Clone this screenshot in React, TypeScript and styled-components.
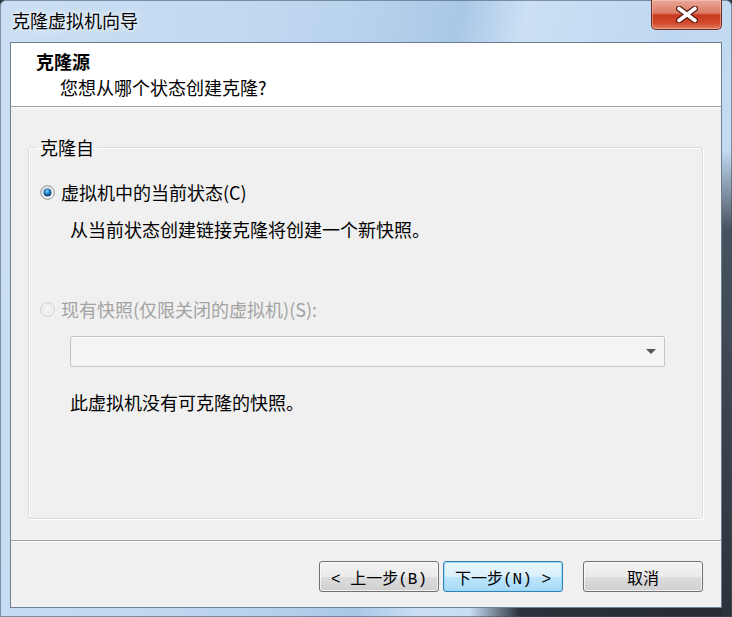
import React from "react";
import styled, { createGlobalStyle } from "styled-components";

const Global = createGlobalStyle`
  html, body { margin: 0; padding: 0; background: #2a3038; }
  body { font-family: "Noto Sans CJK SC", "Noto Sans", sans-serif; }
  * { box-sizing: border-box; }
`;

const Window = styled.div`
  width: 732px;
  height: 617px;
  display: flex;
  flex-direction: column;
  padding: 0 10px 9px 10px;
  border-radius: 6px 6px 0 0;
  background:
    linear-gradient(to bottom, rgba(42,48,56,0) 0px, rgba(42,48,56,0) 150px, rgba(50,58,70,0.85) 230px, #2c323b 100%) right top / 10px 100% no-repeat,
    linear-gradient(to right, rgba(42,48,56,0) 0px, rgba(42,48,56,0) 470px, #2c323b 520px, #262b32 100%) left bottom / 100% 9px no-repeat,
    linear-gradient(100deg, #cadff3 0%, #c1d8f0 30%, #b7d1ec 45%, #a9c7e7 55%, #cbe0f4 63%, #bfd8f1 80%, #c6ddf3 100%);
  box-shadow: inset 0 0 0 1px rgba(60, 80, 100, 0.55);
`;

const TitleBar = styled.div`
  height: 42px;
  flex: none;
  display: flex;
  align-items: flex-start;
  justify-content: space-between;
`;

const Title = styled.div`
  margin-top: 8px;
  padding-left: 2px;
  font-size: 18px;
  line-height: 24px;
  color: #000;
  text-shadow: 0 0 8px rgba(255, 255, 255, 0.95), 0 0 3px rgba(255, 255, 255, 0.9);
`;

const CloseButton = styled.div`
  width: 71px;
  height: 30px;
  border: 1px solid #6e2b22;
  border-top: none;
  border-radius: 0 0 5px 5px;
  background: linear-gradient(to bottom, #e9a99a 0%, #dc7a63 45%, #c8391d 52%, #d34a2c 80%, #e4805f 100%);
  box-shadow: inset 0 0 0 1px rgba(255, 210, 200, 0.45);
  display: flex;
  align-items: center;
  justify-content: center;
`;

const Client = styled.div`
  flex: 1;
  display: flex;
  flex-direction: column;
  border: 1px solid #6f7f92;
  background: #f0f0f0;
`;

const Header = styled.div`
  height: 64px;
  flex: none;
  background: #fff;
  border-bottom: 1px solid #a0a0a0;
  padding: 7px 0 0 25px;
`;

const HeaderTitle = styled.div`
  font-size: 18px;
  font-weight: 700;
  line-height: 22px;
  color: #000;
`;

const HeaderSub = styled.div`
  margin-top: 4px;
  padding-left: 24px;
  font-size: 18px;
  line-height: 22px;
  color: #000;
`;

const Body = styled.div`
  flex: 1;
  display: flex;
  flex-direction: column;
  padding: 28px 18px 21px 17px;
  border-top: 1px solid #fff;
`;

const GroupBox = styled.fieldset`
  flex: 1;
  margin: 0;
  padding: 0;
  border: 1px solid #d5dfe5;
  border-radius: 3px;
  box-shadow: inset 1px 1px 0 #fff, 1px 1px 0 #fff;
  display: flex;
  flex-direction: column;
  min-width: 0;
`;

const Legend = styled.legend`
  margin-left: 8px;
  padding: 0 3px;
  font-size: 18px;
  line-height: 22px;
  color: #000;
`;

const RadioRow = styled.div<{ $top: number; $disabled?: boolean }>`
  margin-top: ${(p) => p.$top}px;
  padding-left: 11px;
  height: 24px;
  display: flex;
  align-items: center;
  gap: 6px;
  font-size: 18px;
  color: ${(p) => (p.$disabled ? "#a3a3a3" : "#000")};
`;

const Text = styled.div<{ $top: number }>`
  margin-top: ${(p) => p.$top}px;
  padding-left: 41px;
  font-size: 18px;
  line-height: 24px;
  color: #000;
`;

const Combo = styled.div`
  margin: 15px 0 0 41px;
  width: 595px;
  height: 31px;
  border: 1px solid #c3c6c9;
  border-radius: 2px;
  background: #f4f4f4;
  box-shadow: inset 0 1px 0 #fafafa;
  display: flex;
  align-items: center;
  justify-content: flex-end;
  padding-right: 8px;
`;

const Arrow = styled.div`
  width: 0;
  height: 0;
  border-left: 5px solid transparent;
  border-right: 5px solid transparent;
  border-top: 5px solid #555;
`;

const Footer = styled.div`
  height: 67px;
  flex: none;
  border-top: 1px solid #a0a0a0;
  box-shadow: inset 0 1px 0 #fff;
  display: flex;
  justify-content: flex-end;
  align-items: flex-start;
  padding: 20px 18px 0 0;
`;

const Button = styled.div<{ $primary?: boolean; $gap?: number }>`
  margin-left: ${(p) => p.$gap ?? 0}px;
  width: 120px;
  height: 31px;
  border: 1px solid ${(p) => (p.$primary ? "#3c7fb1" : "#707070")};
  border-radius: 3px;
  background: ${(p) =>
    p.$primary
      ? "linear-gradient(to bottom, #eaf6fd 0%, #d9f0fc 50%, #bee6fd 51%, #a7d9f5 100%)"
      : "linear-gradient(to bottom, #f2f2f2 0%, #ebebeb 50%, #dddddd 51%, #cfcfcf 100%)"};
  box-shadow: inset 0 0 0 1px ${(p) => (p.$primary ? "rgba(140,220,250,0.9)" : "rgba(255,255,255,0.7)")};
  display: flex;
  align-items: center;
  justify-content: center;
  font-family: "Liberation Mono", "Noto Sans CJK SC", monospace;
  font-size: 16px;
  color: #000;
  white-space: pre;
`;

const Radio = ({ checked, disabled }: { checked?: boolean; disabled?: boolean }) => (
  <svg width="15" height="15" viewBox="0 0 15 15">
    <defs>
      <linearGradient id={disabled ? "rbgd" : "rbg"} x1="0" y1="0" x2="1" y2="1">
        <stop offset="0" stopColor={disabled ? "#f2f2f2" : "#dcdcdc"} />
        <stop offset="1" stopColor={disabled ? "#fbfbfb" : "#ffffff"} />
      </linearGradient>
      <radialGradient id="rdot" cx="0.45" cy="0.35" r="0.7">
        <stop offset="0" stopColor="#8fd3ff" />
        <stop offset="0.45" stopColor="#1b7fc8" />
        <stop offset="1" stopColor="#0b2f5e" />
      </radialGradient>
    </defs>
    <circle cx="7.5" cy="7.5" r="6.8" fill={`url(#${disabled ? "rbgd" : "rbg"})`} stroke={disabled ? "#cacaca" : "#8e8f8f"} strokeWidth="1" />
    {disabled ? (
      <circle cx="7.5" cy="7.5" r="4.3" fill="#f4f4f4" stroke="#e0e0e0" strokeWidth="1" />
    ) : null}
    {checked ? <circle cx="7.5" cy="7.5" r="4" fill="url(#rdot)" /> : null}
  </svg>
);

const CloseGlyph = () => (
  <svg width="24" height="17" viewBox="0 0 24 17">
    <path d="M4 2.5 L20 14.5 M20 2.5 L4 14.5" stroke="#5a1d14" strokeWidth="6" strokeLinecap="round" />
    <path d="M4 2.5 L20 14.5 M20 2.5 L4 14.5" stroke="#ffffff" strokeWidth="3.6" strokeLinecap="round" />
  </svg>
);

export default function App() {
  return (
    <>
      <Global />
      <Window>
        <TitleBar>
          <Title>克隆虚拟机向导</Title>
          <CloseButton>
            <CloseGlyph />
          </CloseButton>
        </TitleBar>
        <Client>
          <Header>
            <HeaderTitle>克隆源</HeaderTitle>
            <HeaderSub>您想从哪个状态创建克隆?</HeaderSub>
          </Header>
          <Body>
            <GroupBox>
              <Legend>克隆自</Legend>
              <RadioRow $top={22}>
                <Radio checked />
                <span>虚拟机中的当前状态(C)</span>
              </RadioRow>
              <Text $top={13}>从当前状态创建链接克隆将创建一个新快照。</Text>
              <RadioRow $top={56} $disabled>
                <Radio disabled />
                <span>现有快照(仅限关闭的虚拟机)(S):</span>
              </RadioRow>
              <Combo>
                <Arrow />
              </Combo>
              <Text $top={23}>此虚拟机没有可克隆的快照。</Text>
            </GroupBox>
          </Body>
          <Footer>
            <Button>{"< 上一步(B)"}</Button>
            <Button $primary $gap={4}>{"下一步(N) >"}</Button>
            <Button $gap={20}>取消</Button>
          </Footer>
        </Client>
      </Window>
    </>
  );
}
